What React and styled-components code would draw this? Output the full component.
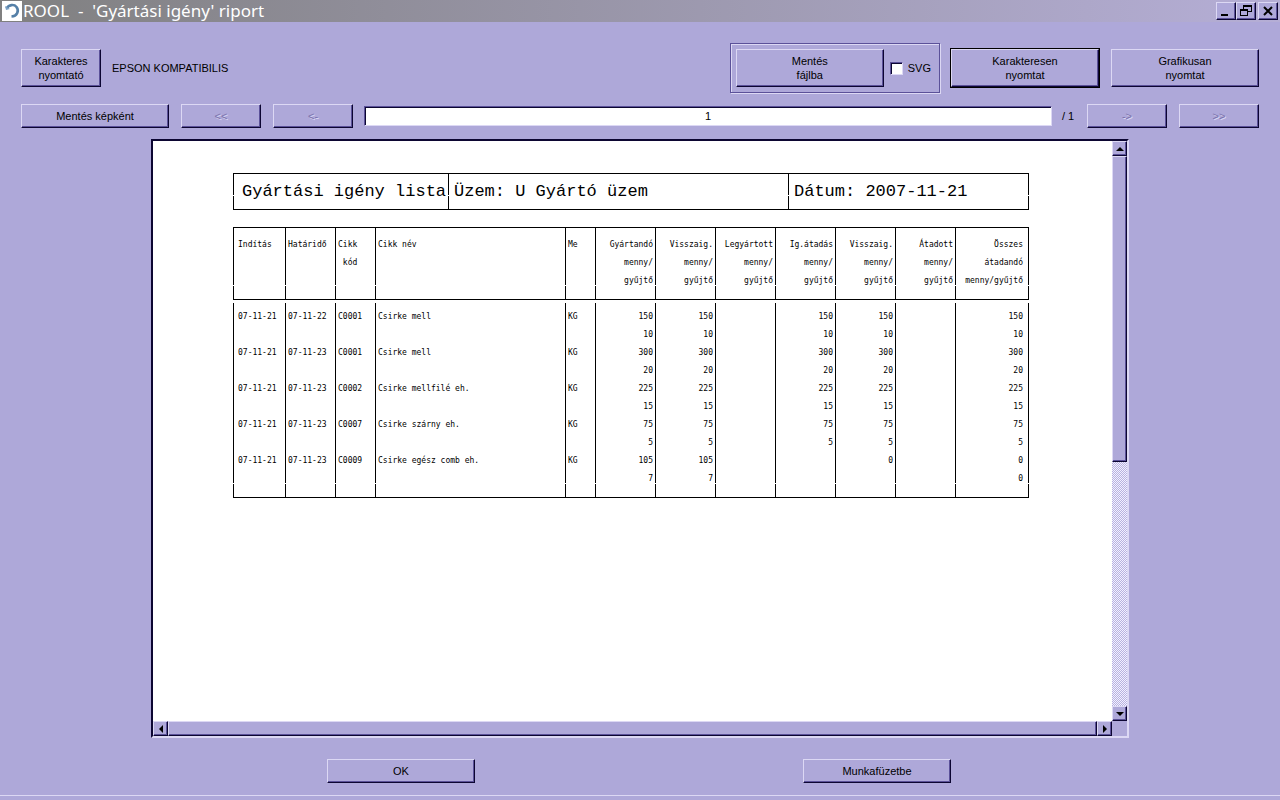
import React, { useState } from 'react'
import styled, { createGlobalStyle, css } from 'styled-components'

const face = '#aea8d9'
const light = '#dcd8f4'
const shade = '#5b5199'
const dark = '#0c0632'

const GlobalStyle = createGlobalStyle`
  * {
    box-sizing: border-box;
  }
  body {
    margin: 0;
    background: ${face};
    color: #000;
    font-family: 'Liberation Sans', Arial, sans-serif;
    font-size: 11px;
    line-height: 14px;
  }
  button, input {
    font: inherit;
    color: inherit;
    border-radius: 0;
  }
`

const Window = styled.div`
  display: flex;
  flex-direction: column;
  min-height: 100vh;
`

const TitleBar = styled.header`
  display: flex;
  align-items: center;
  height: 22px;
  padding: 0 2px;
  background: linear-gradient(to right, #808080, #b5aed6);
`

const Title = styled.h1`
  flex: 1;
  margin: 0 1px;
  color: #fff;
  font-family: 'Noto Sans', sans-serif;
  font-size: 17px;
  font-weight: 400;
  line-height: 22px;
  white-space: pre;
`

const raised = css`
  border: 1px solid;
  border-color: ${light} ${dark} ${dark} ${light};
  box-shadow: inset -1px -1px ${shade};
  background: ${face};
`

const WindowButton = styled.button`
  ${raised}
  display: flex;
  align-items: center;
  justify-content: center;
  width: 20px;
  height: 18px;
  margin-left: ${props => (props.$apart ? '2px' : '0')};
  padding: 0;
`

const Button = styled.button`
  ${raised}
  width: ${props => (props.$small ? '80px' : '148px')};
  height: ${props => (props.$tall ? '38px' : '24px')};
  margin: ${props => (props.$main ? '0' : '1px')};
  padding: 0;
  text-align: center;
  white-space: pre-line;
  &:disabled {
    color: #7a72ac;
    text-shadow: 1px 1px ${light};
  }
`

const DefaultFrame = styled.div`
  display: flex;
  border: 1px solid #000;
`

const Content = styled.main`
  flex: 1;
  display: flex;
  flex-direction: column;
  gap: 10px;
  padding: 21px 20px 0;
`

const Row = styled.div`
  display: flex;
  align-items: center;
  gap: 10px;
`

const PrinterName = styled.span`
  flex: 1;
`

const Group = styled.div`
  display: flex;
  align-items: center;
  gap: 5px;
  padding: 4px 8px 4px 4px;
  border: 1px solid ${shade};
  box-shadow: 1px 1px ${light}, inset 1px 1px ${light};
`

const CheckLabel = styled.label`
  display: flex;
  align-items: center;
  gap: 5px;
`

const sunken = css`
  border: 1px solid;
  border-color: ${shade} ${light} ${light} ${shade};
  box-shadow: inset 1px 1px ${dark};
  background: #fff;
`

const CheckBox = styled.input`
  ${sunken}
  appearance: none;
  width: 13px;
  height: 13px;
  margin: 0;
  &:checked {
    background: radial-gradient(#000 3px, #fff 4px);
  }
`

const PageInput = styled.input`
  ${sunken}
  flex: 1;
  min-width: 0;
  height: 20px;
  padding: 0;
  text-align: center;
`

const PageCount = styled.span`
  width: 14px;
  white-space: nowrap;
`

const Viewer = styled.section`
  flex: 1;
  display: grid;
  grid-template-columns: 1fr 15px;
  grid-template-rows: 1fr 15px;
  margin: 0 131px;
  border: solid;
  border-width: 2px;
  border-color: ${dark} ${light} ${light} ${dark};
`

const Sheet = styled.div`
  overflow: hidden;
  padding: 32px 80px;
  background: #fff;
`

const ScrollBar = styled.div`
  display: flex;
  flex-direction: ${props => (props.$vertical ? 'column' : 'row')};
  background: repeating-conic-gradient(#f2f0ff 0 25%, #b8b2e0 0 50%) 0 0 / 2px 2px;
`

const ScrollArrow = styled.button`
  ${raised}
  display: flex;
  align-items: center;
  justify-content: center;
  width: 15px;
  height: 15px;
  padding: 0;
`

const Thumb = styled.div`
  ${raised}
  flex: ${props => props.$size};
`

const Rest = styled.div`
  flex: ${props => props.$size};
`

const Footer = styled.footer`
  display: flex;
  justify-content: space-around;
  padding: 20px 165px 11px 163px;
  border-bottom: 1px solid ${light};
  margin-bottom: 4px;
`

const rule = (start, gap) =>
  `linear-gradient(#fff ${start}px, #000 ${start}px, #000 ${gap}px, #fff ${gap}px, #fff ${gap + 1}px, #000 ${gap + 1}px)`

const ruled = (start, gap) => css`
  background: ${rule(start, gap)} right / 1px 100% no-repeat;
  &:first-child {
    background: ${rule(start, gap)} right / 1px 100% no-repeat,
      ${rule(start, gap)} left / 1px 100% no-repeat;
  }
`

const Heading = styled.div`
  display: grid;
  grid-template-columns: 216fr 340fr 240fr;
  width: 796px;
  margin-bottom: 17px;
  border: solid #000;
  border-width: 1px 0;
  font-family: 'Liberation Mono', monospace;
  font-size: 17px;
  line-height: 35px;
`

const HeadingCell = styled.div`
  ${ruled(0, 21)}
  padding-left: 5px;
  white-space: nowrap;
  &:first-child {
    padding-left: 9px;
  }
`

const Table = styled.table`
  width: 796px;
  table-layout: fixed;
  border-collapse: separate;
  border-spacing: 0;
  font-family: 'DejaVu Sans Mono', 'Liberation Mono', monospace;
  font-size: 8px;
  line-height: 18px;
`

const cell = css`
  padding: 0 3px 0 2px;
  font-weight: 400;
  vertical-align: top;
  text-align: ${props => (props.$right ? 'right' : 'left')};
  white-space: pre;
  &:first-child {
    padding-left: 5px;
  }
  &:last-child {
    padding-right: 6px;
  }
`

const HeadCell = styled.th`
  ${cell}
  ${ruled(0, 57)}
  height: 73px;
  padding-top: 8px;
  border: solid #000;
  border-width: 1px 0;
`

const BodyCell = styled.td`
  ${cell}
  ${ruled(0, 100)}
  height: 36px;
  tr:first-child > & {
    ${ruled(3, 100)}
    height: 44px;
    padding-top: 8px;
  }
  tr:last-child > & {
    ${ruled(0, 31)}
    height: 46px;
    border-bottom: 1px solid #000;
  }
`

const columns = [
  { label: 'Indítás', width: 53 },
  { label: 'Határidő', width: 50 },
  { label: 'Cikk\n kód', width: 40 },
  { label: 'Cikk név', width: 190 },
  { label: 'Me', width: 30 },
  { label: 'Gyártandó\nmenny/\ngyűjtő', width: 60, right: true },
  { label: 'Visszaig.\nmenny/\ngyűjtő', width: 60, right: true },
  { label: 'Legyártott\nmenny/\ngyűjtő', width: 60, right: true },
  { label: 'Ig.átadás\nmenny/\ngyűjtő', width: 60, right: true },
  { label: 'Visszaig.\nmenny/\ngyűjtő', width: 60, right: true },
  { label: 'Átadott\nmenny/\ngyűjtő', width: 60, right: true },
  { label: 'Összes\nátadandó\nmenny/gyűjtő', width: 73, right: true },
]

const rows = [
  ['07-11-21', '07-11-22', 'C0001', 'Csirke mell', 'KG', '150\n10', '150\n10', '', '150\n10', '150\n10', '', '150\n10'],
  ['07-11-21', '07-11-23', 'C0001', 'Csirke mell', 'KG', '300\n20', '300\n20', '', '300\n20', '300\n20', '', '300\n20'],
  ['07-11-21', '07-11-23', 'C0002', 'Csirke mellfilé eh.', 'KG', '225\n15', '225\n15', '', '225\n15', '225\n15', '', '225\n15'],
  ['07-11-21', '07-11-23', 'C0007', 'Csirke szárny eh.', 'KG', '75\n5', '75\n5', '', '75\n5', '75\n5', '', '75\n5'],
  ['07-11-21', '07-11-23', 'C0009', 'Csirke egész comb eh.', 'KG', '105\n7', '105\n7', '', '', '0', '', '0\n0'],
]

const arrows = {
  up: 'M0 6 L4 2 L8 6 Z',
  down: 'M0 2 H8 L4 6 Z',
  left: 'M6 0 V8 L2 4 Z',
  right: 'M2 0 V8 L6 4 Z',
}

const Arrow = ({ to }) => (
  <ScrollArrow aria-label={to}>
    <svg width="8" height="8">
      <path d={arrows[to]} />
    </svg>
  </ScrollArrow>
)

const Logo = () => (
  <svg width="20" height="20" viewBox="0 0 20 20">
    <rect width="20" height="20" fill="#fff" />
    <path d="M4.500 7.500 C7 3.500 12 3 14.500 6 C17.500 10 15 15 9.500 15.500" fill="none" stroke="#5580a8" strokeWidth="2.600" />
    <path d="M3 5 L4 9 L8 8 Z" fill="#7ba0c4" />
  </svg>
)

const Report = () => (
  <>
    <Heading>
      <HeadingCell>Gyártási igény lista</HeadingCell>
      <HeadingCell>Üzem: U Gyártó üzem</HeadingCell>
      <HeadingCell>Dátum: 2007-11-21</HeadingCell>
    </Heading>
    <Table>
      <colgroup>
        {columns.map((column, i) => (
          <col key={i} width={column.width} />
        ))}
      </colgroup>
      <thead>
        <tr>
          {columns.map((column, i) => (
            <HeadCell key={i} $right={column.right}>{column.label}</HeadCell>
          ))}
        </tr>
      </thead>
      <tbody>
        {rows.map((row, r) => (
          <tr key={r}>
            {row.map((value, i) => (
              <BodyCell key={i} $right={columns[i].right}>{value}</BodyCell>
            ))}
          </tr>
        ))}
      </tbody>
    </Table>
  </>
)

const App = () => {
  const [svg, setSvg] = useState(false)
  const [page, setPage] = useState('1')

  return (
    <Window>
      <GlobalStyle />
      <TitleBar>
        <Logo />
        <Title>{"ROOL  -  'Gyártási igény' riport"}</Title>
        <WindowButton aria-label="Kis méret">
          <svg width="14" height="14"><path d="M2 10h7v2H2z" /></svg>
        </WindowButton>
        <WindowButton aria-label="Előző méret">
          <svg width="14" height="14" fill="none" stroke="#000" shapeRendering="crispEdges">
            <path d="M4.500 5V1.500h8v6H9M4 2.500h9M1.500 5.500h7v6h-7zM1 6.500h8" />
          </svg>
        </WindowButton>
        <WindowButton $apart aria-label="Bezárás">
          <svg width="14" height="14"><path d="M3 3l8 8M11 3l-8 8" stroke="#000" strokeWidth="2" /></svg>
        </WindowButton>
      </TitleBar>
      <Content>
        <Row>
          <Button $small $tall>{'Karakteres\nnyomtató'}</Button>
          <PrinterName>EPSON KOMPATIBILIS</PrinterName>
          <Group>
            <Button $tall>{'Mentés\nfájlba'}</Button>
            <CheckLabel>
              <CheckBox type="checkbox" checked={svg} onChange={e => setSvg(e.target.checked)} />
              SVG
            </CheckLabel>
          </Group>
          <DefaultFrame>
            <Button $tall $main>{'Karakteresen\nnyomtat'}</Button>
          </DefaultFrame>
          <Button $tall>{'Grafikusan\nnyomtat'}</Button>
        </Row>
        <Row>
          <Button>Mentés képként</Button>
          <Button $small disabled>{'<<'}</Button>
          <Button $small disabled>{'<-'}</Button>
          <PageInput aria-label="Oldal" value={page} onChange={e => setPage(e.target.value)} />
          <PageCount>/ 1</PageCount>
          <Button $small disabled>{'->'}</Button>
          <Button $small disabled>{'>>'}</Button>
        </Row>
        <Viewer>
          <Sheet>
            <Report />
          </Sheet>
          <ScrollBar $vertical>
            <Arrow to="up" />
            <Thumb $size={305} />
            <Rest $size={245} />
            <Arrow to="down" />
          </ScrollBar>
          <ScrollBar>
            <Arrow to="left" />
            <Thumb $size={1} />
            <Arrow to="right" />
          </ScrollBar>
        </Viewer>
      </Content>
      <Footer>
        <Button>OK</Button>
        <Button>Munkafüzetbe</Button>
      </Footer>
    </Window>
  )
}

export default App
